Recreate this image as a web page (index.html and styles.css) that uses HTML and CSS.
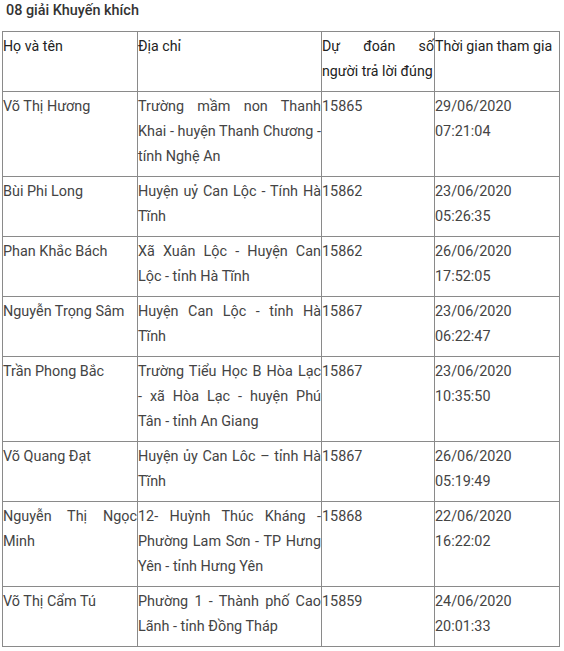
FILE: index.html
```html
<!DOCTYPE html>
<html lang="vi">
<head>
<meta charset="utf-8">
<link rel="stylesheet" href="styles.css">
</head>
<body>
<div class="page">
  <p class="title">08 giải Khuyến khích</p>
  <table class="results">
    <colgroup>
      <col class="c1"><col class="c2"><col class="c3"><col class="c4">
    </colgroup>
    <thead>
      <tr><th>Họ và tên</th><th>Địa chỉ</th><th>Dự đoán số người trả lời đúng</th><th>Thời gian tham gia</th></tr>
    </thead>
    <tbody>
      <tr><td>Võ Thị Hương</td><td>Trường mầm non Thanh Khai - huyện Thanh Chương - tính Nghệ An</td><td>15865</td><td>29/06/2020 07:21:04</td></tr>
      <tr><td>Bùi Phi Long</td><td>Huyện uỷ Can Lộc - Tính Hà Tĩnh</td><td>15862</td><td>23/06/2020 05:26:35</td></tr>
      <tr><td>Phan Khắc Bách</td><td>Xã Xuân Lộc - Huyện Can Lộc - tỉnh Hà Tĩnh</td><td>15862</td><td>26/06/2020 17:52:05</td></tr>
      <tr><td>Nguyễn Trọng Sâm</td><td>Huyện Can Lộc - tỉnh Hà Tĩnh</td><td>15867</td><td>23/06/2020 06:22:47</td></tr>
      <tr><td>Trần Phong Bắc</td><td>Trường Tiểu Học B Hòa Lạc - xã Hòa Lạc - huyện Phú Tân - tỉnh An Giang</td><td>15867</td><td>23/06/2020 10:35:50</td></tr>
      <tr><td>Võ Quang Đạt</td><td>Huyện ủy Can Lôc – tỉnh Hà Tĩnh</td><td>15867</td><td>26/06/2020 05:19:49</td></tr>
      <tr><td>Nguyễn Thị Ngọc Minh</td><td>12- Huỳnh Thúc Kháng - Phường Lam Sơn - TP Hưng Yên - tỉnh Hưng Yên</td><td>15868</td><td>22/06/2020 16:22:02</td></tr>
      <tr><td>Võ Thị Cẩm Tú</td><td>Phường 1 - Thành phố Cao Lãnh - tỉnh Đồng Tháp</td><td>15859</td><td>24/06/2020 20:01:33</td></tr>
    </tbody>
  </table>
</div>
</body>
</html>
```
FILE: styles.css
```css
html, body {
  margin: 0;
  padding: 0;
  background: #fff;
}
.page {
  font-family: Roboto, "Noto Sans", sans-serif;
  font-size: 14.4px;
  color: #444;
  padding: 0 0 0 2px;
}
.title {
  margin: 0 0 11px 4px;
  padding-top: 1px;
  line-height: 20px;
  font-weight: 500;
  color: #333;
}
.results {
  border-collapse: collapse;
  table-layout: fixed;
  width: 557px;
  border: 1px solid #333;
  margin-top: -1px;
}
.c1 { width: 135px; }
.c2 { width: 184px; }
.c3 { width: 113px; }
.c4 { width: 125px; }
.results th,
.results td {
  border: 1px solid #8a8a8a;
  padding: 2px 0 7px 0;
  line-height: 25px;
  text-align: justify;
  vertical-align: top;
  font-weight: 400;
}
.results th {
  color: #222;
  font-size: 14.2px;
}
```
